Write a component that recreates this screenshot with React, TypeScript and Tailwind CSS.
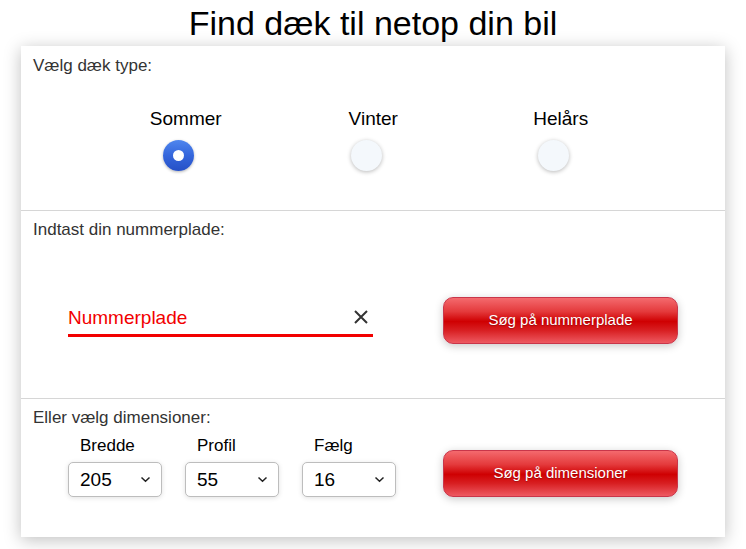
import React from "react";

const font = { fontFamily: '"Liberation Sans", Arial, sans-serif' };

function Radio({ checked }: { checked?: boolean }) {
  if (checked) {
    return (
      <div className="w-[31px] h-[31px] rounded-full bg-[linear-gradient(180deg,#4f86ee_0%,#3466dc_50%,#2650c6_100%)] shadow-[0_1px_3px_rgba(0,0,0,0.3)] flex items-center justify-center">
        <div className="w-[11px] h-[11px] rounded-full bg-white" />
      </div>
    );
  }
  return (
    <div className="w-[31px] h-[31px] rounded-full bg-[#f4f8fc] shadow-[0_1px_4px_rgba(0,0,0,0.28)]" />
  );
}

function RedButton({ children }: { children: React.ReactNode }) {
  return (
    <button className="w-[235px] h-[47px] rounded-[10px] border border-[#c9364a] bg-[linear-gradient(180deg,#f46a6e_0%,#e43a3c_30%,#cf0002_52%,#d81f22_72%,#ee5a62_100%)] text-white text-[15px] shadow-[0_2px_8px_rgba(0,0,0,0.22)] [text-shadow:0_1px_1px_rgba(0,0,0,0.25)]">
      {children}
    </button>
  );
}

function Select({ value }: { value: string }) {
  return (
    <div className="w-[94px] h-[35px] rounded-[5px] border border-[#bdbdbd] bg-white shadow-[0_1px_5px_rgba(0,0,0,0.12)] flex items-center justify-between pl-[11px] pr-[10px]">
      <span className="text-[19px] text-black leading-none">{value}</span>
      <svg width="11" height="7" viewBox="0 0 11 7">
        <path d="M1.5 1.5 L5.5 5.3 L9.5 1.5" fill="none" stroke="#222" strokeWidth="1.5" />
      </svg>
    </div>
  );
}

export default function App() {
  return (
    <div style={font} className="w-[746px] h-[549px] bg-white overflow-hidden">
      <h1 className="h-[46px] flex items-center justify-center text-[34px] text-black leading-none pb-[1px]">
        Find dæk til netop din bil
      </h1>
      <div className="mx-[21px] h-[491px] bg-white shadow-[0_3px_16px_rgba(0,0,0,0.25)] flex flex-col">
        <section className="h-[165px] border-b border-[#d6d6d6]">
          <div className="pt-[10px] pl-[12px] text-[17px] leading-[20px] text-[#333]">Vælg dæk type:</div>
          <div className="flex pl-[71px] pt-[32px]">
            {[
              { label: "Sommer", checked: true },
              { label: "Vinter" },
              { label: "Helårs" },
            ].map((o) => (
              <div key={o.label} className="w-[187.5px] flex flex-col items-center">
                <div className="text-[19px] leading-[22px] text-black">{o.label}</div>
                <div className="mt-[10px] mr-[14px]">
                  <Radio checked={o.checked} />
                </div>
              </div>
            ))}
          </div>
        </section>
        <section className="h-[188px] border-b border-[#d6d6d6]">
          <div className="pt-[9px] pl-[12px] text-[17px] leading-[20px] text-[#333]">Indtast din nummerplade:</div>
          <div className="flex items-start pl-[47px] pt-[57px]">
            <div className="w-[305px] mt-[9px] border-b-[3px] border-[#f20000] flex items-center justify-between pb-[4px]">
              <span className="text-[19px] leading-[24px] text-[#f20000]">Nummerplade</span>
              <svg width="16" height="16" viewBox="0 0 16 16" className="mr-[4px] -mt-[3px]">
                <path d="M2 2 L14 14 M14 2 L2 14" stroke="#333" strokeWidth="2" />
              </svg>
            </div>
            <div className="ml-[70px]">
              <RedButton>Søg på nummerplade</RedButton>
            </div>
          </div>
        </section>
        <section className="flex-1">
          <div className="pt-[9px] pl-[12px] text-[17px] leading-[20px] text-[#333]">Eller vælg dimensioner:</div>
          <div className="flex pl-[47px] pt-[8px]">
            <div className="flex gap-[23px]">
              {[
                { label: "Bredde", value: "205" },
                { label: "Profil", value: "55" },
                { label: "Fælg", value: "16" },
              ].map((f) => (
                <div key={f.label} className="flex flex-col">
                  <div className="pl-[12px] text-[17px] leading-[20px] text-black">{f.label}</div>
                  <div className="mt-[6px]">
                    <Select value={f.value} />
                  </div>
                </div>
              ))}
            </div>
            <div className="ml-[47px] mt-[14px]">
              <RedButton>Søg på dimensioner</RedButton>
            </div>
          </div>
        </section>
      </div>
    </div>
  );
}
